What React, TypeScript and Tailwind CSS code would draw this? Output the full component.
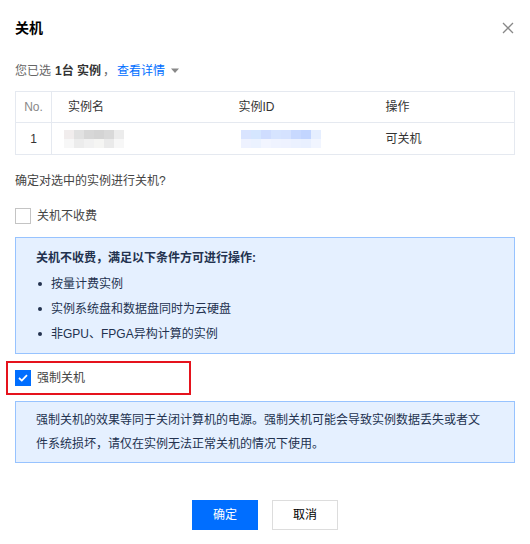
const font = { fontFamily: '"Liberation Sans", "Noto Sans CJK SC", sans-serif' };

function Mosaic({ cells }: { cells: string[][] }) {
  return (
    <div className="flex flex-col">
      {cells.map((row, i) => (
        <div key={i} className="flex">
          {row.map((c, j) => (
            <div key={j} className="h-[9px] w-[10px]" style={{ background: c }} />
          ))}
        </div>
      ))}
    </div>
  );
}

const nameCells = [
  ["#f1eded", "#e1e1e1", "#d7d7d7", "#d4d4d4", "#d9d9d9", "#ececec"],
  ["#f7f7f7", "#ececec", "#f1f1f1", "#f5f5f3", "#eaeaea", "#f7f7f7"],
];
const idCells = [
  ["#d9e4ff", "#d5e6ff", "#cfddff", "#d6e4ff", "#d5e2ff", "#c8d9ff", "#c2d5ff", "#e5eeff"],
  ["#eef2ff", "#ebf2ff", "#f2f5ff", "#eff3ff", "#eef2ff", "#ebf1ff", "#e9f0ff", "#f1f5ff"],
];

export default function App() {
  return (
    <div className="w-[530px] h-[544px] bg-white px-[15px] text-[12px] text-[#333]" style={font}>
      <div className="flex items-center justify-between pt-[18px] h-[38px]">
        <h1 className="text-[14px] font-bold text-black leading-[20px]">关机</h1>
        <svg width="12" height="12" viewBox="0 0 12 12" className="mr-[1px]">
          <path d="M1 1L11 11M11 1L1 11" stroke="#888" strokeWidth="1.3" />
        </svg>
      </div>

      <div className="mt-[23px] flex items-center leading-[20px] text-[#666]">
        <span>您已选</span>
        <span className="ml-[4px] font-bold text-[#333]">1台 实例</span>
        <span className="ml-[2px]">，</span>
        <span className="ml-[2px] text-[#006eff]">查看详情</span>
        <svg width="8" height="6" viewBox="0 0 8 6" className="ml-[6px]">
          <path d="M0 0.5H8L4 5Z" fill="#888" />
        </svg>
      </div>

      <table className="mt-[10px] w-full table-fixed border-collapse border border-[#e5e9f0]">
        <thead>
          <tr className="h-[31px]">
            <th className="w-[36px] border border-[#e5e9f0] text-center font-normal text-[#888]">No.</th>
            <th className="w-[187px] border-y border-[#e5e9f0] pl-[16px] text-left font-normal">实例名</th>
            <th className="w-[147px] border-y border-[#e5e9f0] text-left font-normal">实例ID</th>
            <th className="border-y border-[#e5e9f0] text-left font-normal">操作</th>
          </tr>
        </thead>
        <tbody>
          <tr className="h-[32px]">
            <td className="border border-[#e5e9f0] text-center">1</td>
            <td className="border-y border-[#e5e9f0] pl-[12px]">
              <Mosaic cells={nameCells} />
            </td>
            <td className="border-y border-[#e5e9f0] pl-[2px]">
              <Mosaic cells={idCells} />
            </td>
            <td className="border-y border-[#e5e9f0]">可关机</td>
          </tr>
        </tbody>
      </table>

      <p className="mt-[16px] leading-[20px] text-[#444]">确定对选中的实例进行关机?</p>

      <label className="mt-[15px] flex h-[20px] items-center gap-[6px] text-[#444]">
        <span className="h-[16px] w-[16px] border border-[#c4c4c4] bg-white" />
        关机不收费
      </label>

      <div className="mt-[11px] border border-[#97c3ff] bg-[#e5f0ff] px-[20px] pt-[8px] pb-[7px] text-[#23324f]">
        <p className="font-bold leading-[24px]">关机不收费，满足以下条件方可进行操作:</p>
        <ul className="mt-[1px]">
          {["按量计费实例", "实例系统盘和数据盘同时为云硬盘", "非GPU、FPGA异构计算的实例"].map((t) => (
            <li key={t} className="flex h-[25px] items-center">
              <span className="ml-[2px] mr-[9px] h-[4px] w-[4px] rounded-full bg-[#23324f]" />
              {t}
            </li>
          ))}
        </ul>
      </div>

      <div className="-ml-[9px] mt-[7px] flex h-[34px] w-[185px] items-center border-2 border-[#e5131d] pl-[7px]">
        <span className="flex h-[16px] w-[16px] items-center justify-center bg-[#006eff]">
          <svg width="10" height="8" viewBox="0 0 10 8">
            <path d="M1 4L3.8 6.6L9 1.2" stroke="white" strokeWidth="1.8" fill="none" />
          </svg>
        </span>
        <span className="ml-[6px] text-[#444]">强制关机</span>
      </div>

      <div className="mt-[6px] border border-[#97c3ff] bg-[#e5f0ff] pl-[20px] pr-[25px] py-[6px] leading-[24px] text-[#23324f]">
        强制关机的效果等同于关闭计算机的电源。强制关机可能会导致实例数据丢失或者文件系统损坏，请仅在实例无法正常关机的情况下使用。
      </div>

      <div className="mt-[37px] flex justify-center gap-[14px]">
        <button className="h-[30px] w-[66px] bg-[#006eff] text-white">确定</button>
        <button className="h-[30px] w-[66px] border border-[#ddd] bg-white text-[#000]">取消</button>
      </div>
    </div>
  );
}
